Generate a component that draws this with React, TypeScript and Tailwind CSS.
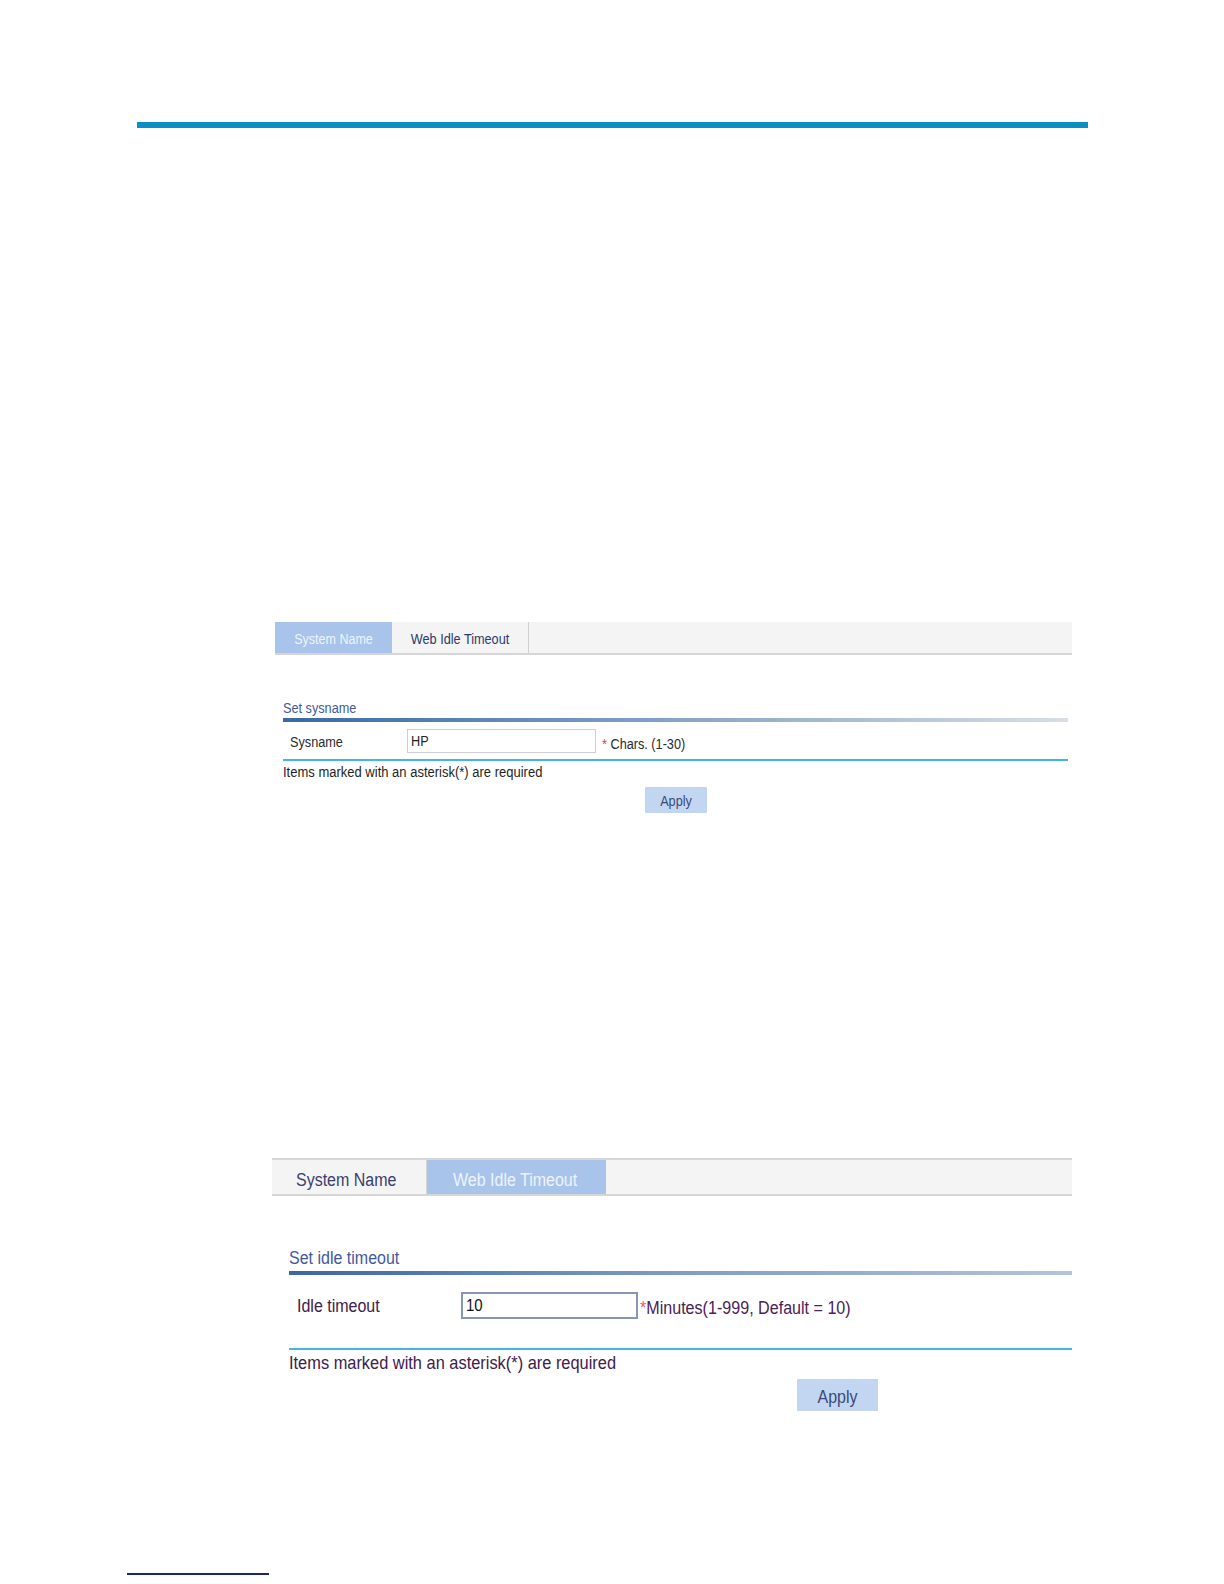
import React from 'react';

const font = { fontFamily: '"Liberation Sans", Arial, sans-serif' };

// the source screenshot is slightly stretched vertically; mimic it on the text
function T({ children, className = '' }: { children: React.ReactNode; className?: string }) {
  return <span className={`inline-block scale-y-[1.15] ${className}`}>{children}</span>;
}

function SysnamePanel() {
  return (
    <div className="ml-[275px] w-[797px]">
      {/* Tabs */}
      <div className="flex h-[33px] bg-[#f4f4f4] border-b-2 border-[#d6d6d6]">
        <div className="w-[117px] flex items-center justify-center pt-[4px] bg-[#a8c4ea] text-[12.5px] text-[#eef3fb]">
          <T>System Name</T>
        </div>
        <div className="w-[137px] flex items-center justify-center pt-[4px] border-r border-[#d0d0d0] text-[12.7px] text-[#2d3a6b]">
          <T>Web Idle Timeout</T>
        </div>
      </div>

      <div className="ml-[8px] w-[785px]">
        <div className="mt-[45px] text-[12.7px] leading-[16px] text-[#3f5a9c]">
          <T>Set sysname</T>
        </div>
        <div className="mt-[2px] h-[4px] bg-gradient-to-r from-[#3a67a5] via-[#86a3c8] to-[#d9dee4]" />
        <div className="flex items-center h-[39px] border-b-2 border-[#45b5e6]">
          <span className="ml-[7px] w-[117px] mt-[5px] text-[12.7px] text-[#2a2a2a]">
            <T>Sysname</T>
          </span>
          <div className="w-[189px] h-[24px] mt-[1px] border border-[#cfcfcf] flex items-center px-[3px] pt-[2px] text-[12.7px] text-[#222]">
            <T>HP</T>
          </div>
          <span className="ml-[6px] mt-[8px] text-[12.7px] text-[#2a2a2a]">
            <T>
              <span className="text-[#e04040]">*</span> Chars. (1-30)
            </T>
          </span>
        </div>
        <div className="mt-[3px] text-[13px] leading-[16px] text-[#1f1f1f]">
          <T>Items marked with an asterisk(*) are required</T>
        </div>
        <div className="mt-[7px] ml-[362px] w-[62px] h-[26px] pt-[3px] bg-[#c3d6f1] flex items-center justify-center text-[12.7px] text-[#3a4a7a]">
          <T>Apply</T>
        </div>
      </div>
    </div>
  );
}

function IdleTimeoutPanel() {
  return (
    <div className="ml-[272px] w-[800px]">
      {/* Tabs */}
      <div className="flex h-[38px] bg-[#f4f4f4] border-t-2 border-b-2 border-[#d6d6d6]">
        <div className="w-[155px] flex items-center pl-[24px] pt-[5px] border-r border-[#d6d6d6] text-[16px] text-[#3a3f6e]">
          <T>System Name</T>
        </div>
        <div className="w-[179px] flex items-center pl-[26px] pt-[5px] bg-[#a8c4ea] text-[16px] text-[#eef3fb]">
          <T>Web Idle Timeout</T>
        </div>
      </div>

      <div className="ml-[17px] w-[783px]">
        <div className="mt-[52px] text-[16px] leading-[20px] text-[#3f5a9c]">
          <T>Set idle timeout</T>
        </div>
        <div className="mt-[3px] h-[4px] bg-gradient-to-r from-[#3a67a5] via-[#7f9dc5] to-[#b4c4d8]" />
        <div className="flex items-center h-[75px] border-b-2 border-[#45b5e6]">
          <span className="ml-[8px] w-[164px] mb-[12px] text-[16px] text-[#40204e]">
            <T>Idle timeout</T>
          </span>
          <div className="w-[177px] h-[27px] mb-[12px] border-2 border-[#8797b3] flex items-center px-[3px] text-[15px] text-[#111]">
            <T>10</T>
          </div>
          <span className="ml-[2px] mb-[8px] text-[16.1px] text-[#4a2258]">
            <T>
              <span className="text-[#e85a6a]">*</span>Minutes(1-999, Default = 10)
            </T>
          </span>
        </div>
        <div className="mt-[2px] text-[16.4px] leading-[20px] text-[#40204e]">
          <T>Items marked with an asterisk(*) are required</T>
        </div>
        <div className="mt-[7px] ml-[508px] w-[81px] h-[32px] pt-[3px] bg-[#c3d6f1] flex items-center justify-center text-[16px] text-[#3a4a7a]">
          <T>Apply</T>
        </div>
      </div>
    </div>
  );
}

export default function App() {
  return (
    <div className="w-[1224px] h-[1584px] bg-white overflow-hidden" style={font}>
      <div className="pt-[122px]">
        <div className="ml-[137px] w-[951px] h-[6px] bg-[#0a8fc4]" />
      </div>

      <div className="mt-[494px]">
        <SysnamePanel />
      </div>

      <div className="mt-[345px]">
        <IdleTimeoutPanel />
      </div>

      <div className="mt-[162px] ml-[127px] w-[142px] h-[2px] bg-[#1a237e]" />
    </div>
  );
}
